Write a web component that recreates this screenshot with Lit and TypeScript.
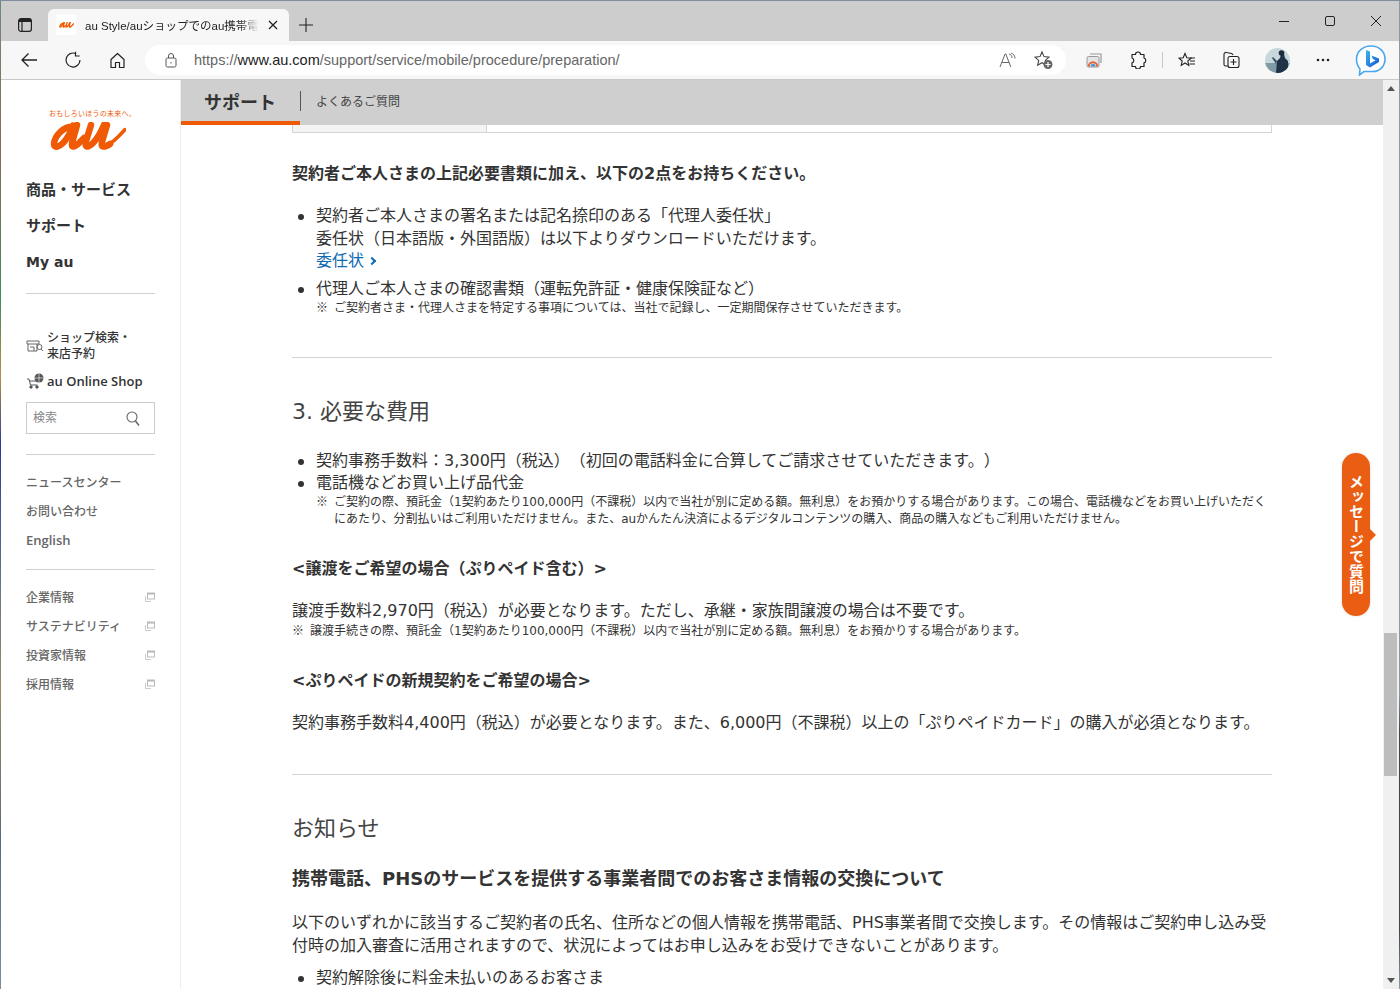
import { LitElement, html, css } from "lit";
import { customElement } from "lit/decorators.js";

const ext = html`<svg class="ext" width="10" height="10" viewBox="0 0 10 10"><path d="M0.5 4v5.5H6" fill="none" stroke="#ccc"/><rect x="2.5" y="1" width="7" height="6" fill="#fff" stroke="#bbb"/><rect x="2.5" y="1" width="7" height="1.6" fill="#bbb"/></svg>`;

@customElement("app-root")
export class AppRoot extends LitElement {
  static styles = css`
    :host { display: block; position: relative; width: 1400px; height: 989px; overflow: hidden; background: #fff; color: #333;
      font-family: "DejaVu Sans", "Noto Sans CJK JP", sans-serif; text-spacing-trim: space-all; }
    * { box-sizing: border-box; }
    svg { display: block; flex: none; }
    .tabs { height: 41px; background: #cdcdcd; border-top: 1px solid #7d8d9c; display: flex; align-items: flex-end; padding-left: 1px; }
    .tabicon { width: 47px; height: 32px; display: flex; align-items: center; justify-content: center; }
    .tab { width: 241px; height: 32px; background: #f7f7f7; border-radius: 6px 6px 0 0; display: flex; align-items: center; padding-left: 8px; font-size: 11.5px; color: #222; }
    .fav { width: 20px; height: 20px; background: #fff; display: flex; align-items: center; justify-content: center; margin-right: 9px; }
    .tabtitle { width: 174px; white-space: nowrap; overflow: hidden; font-family: "Liberation Sans", "Noto Sans CJK JP", sans-serif; -webkit-mask-image: linear-gradient(90deg, #000 88%, transparent); mask-image: linear-gradient(90deg, #000 88%, transparent); }
    .tabx { margin-left: 9px; }
    .newtab { width: 34px; height: 32px; display: flex; align-items: center; justify-content: center; }
    .winbtns { margin-left: auto; display: flex; align-self: stretch; align-items: center; gap: 30px; padding-right: 16px; }
    .toolbar { height: 39px; background: #f7f7f7; border-bottom: 1px solid #c9c9c9; display: flex; align-items: center; padding-left: 7px; position: relative; }
    .nav { width: 44px; display: flex; justify-content: center; }
    .addr { width: 921px; height: 30px; margin-left: 6px; background: #fff; border-radius: 15px; display: flex; align-items: center; padding-left: 20px; padding-right: 12px; font-family: "Liberation Sans", sans-serif; font-size: 14.5px; color: #666; }
    .addr b { font-weight: 400; color: #222; }
    .url { margin-left: 17px; flex: 1; }
    .addr-ico { display: flex; gap: 18px; align-items: center; }
    .tools { display: flex; align-items: center; margin-left: 8px; }
    .tool { width: 40px; display: flex; justify-content: center; }
    .tool.w48 { width: 48px; }
    .tool.w52 { width: 52px; }
    .tool.w56 { width: 56px; }
    .sep { width: 1px; height: 16px; background: #c8c8c8; }
    .main { display: flex; height: 909px; }
    .side { width: 181px; border-right: 1px solid #eee; flex: none; padding: 0 25px 0 26px; }
    .logo { display: flex; flex-direction: column; align-items: center; padding-top: 29px; height: 92px; padding-left: 4px; }
    .tag { font-size: 7px; line-height: 9px; color: #f05a05; white-space: nowrap; letter-spacing: 0.25px; font-family: "Noto Sans CJK JP", sans-serif; }
    .logo svg { margin-top: 4px; margin-right: 9px; }
    .gnav { display: block; font-weight: 700; font-size: 15px; line-height: 36px; color: #333; white-space: nowrap; }
    .gnav.latin { font-size: 14px; }
    .hr { height: 1px; background: #d0d0d0; }
    .hr.a { margin-top: 13px; }
    .hr.b { margin-top: 20px; }
    .hr.c { margin-top: 15px; }
    .spacer { height: 12px; }
    .shop { display: flex; align-items: center; gap: 3px; font-size: 12px; line-height: 16px; font-weight: 500; color: #333; font-family: "Noto Sans CJK JP", sans-serif; }
    .shop.s1 { margin-top: 35px; }
    .shop.s2 { margin-top: 12px; height: 16px; font-family: "Open Sans", sans-serif; font-weight: 600; font-size: 13px; }
    .search { height: 32px; border: 1px solid #ccc; margin-top: 13px; display: flex; align-items: center; justify-content: space-between; padding: 0 14px 0 6px; font-size: 12px; color: #888; font-family: "Noto Sans CJK JP", sans-serif; }
    .search span { margin-bottom: 3px; }
    .sub { display: flex; align-items: center; justify-content: space-between; height: 29px; font-size: 12px; color: #666; font-weight: 500; white-space: nowrap; font-family: "Open Sans", "Noto Sans CJK JP", sans-serif; }
    .sub.en { font-size: 13px; font-weight: 600; }
    .content { flex: 1; min-width: 0; }
    .hdr { height: 45px; background: #cfcfcf; display: flex; align-items: center; font-family: "Noto Sans CJK JP", sans-serif; }
    .hdr-title { width: 119px; height: 45px; border-bottom: 4px solid #f05a05; padding-left: 23px; font-size: 18px; font-weight: 700; line-height: 43px; color: #333; }
    .hdr-link { border-left: 1px solid #555; height: 20px; line-height: 20px; padding-left: 15px; font-size: 12px; color: #444; margin-top: -3px; }
    .art { padding: 0 111px; font-size: 16px; line-height: 22.5px; color: #333; }
    .tbl { height: 8px; border: 1px solid #d4d4d4; border-top: 0; display: flex; }
    .tbl i { display: block; width: 194px; background: #f4f4f4; border-right: 1px solid #d4d4d4; }
    p, h2, h3, ul { margin: 0; padding: 0; font-weight: 400; }
    h3 { font-weight: 700; font-size: 16px; line-height: 24px; }
    h3.big { font-size: 18px; }
    h2 { font-size: 22px; line-height: 32px; color: #444; }
    ul { list-style: none; }
    li { position: relative; padding-left: 24px; }
    li::before { content: ""; position: absolute; left: 6px; top: 9px; width: 6px; height: 6px; border-radius: 50%; background: #333; }
    .sm { font-size: 12px; line-height: 17.5px; display: flex; }
    .sm.tight { margin-top: -1px; }
    .sm.loose { margin-top: 1px; }
    .kome { flex: none; width: 18px; font-family: "Noto Sans CJK JP", sans-serif; margin-top: -2px; }
    a { color: #0f6cb2; }
    .ar { display: inline-block; width: 6px; height: 6px; border-top: 2px solid #0f6cb2; border-right: 2px solid #0f6cb2; transform: rotate(45deg); margin-left: 5px; vertical-align: 2px; }
    .div { height: 1px; background: #d4d4d4; margin-top: 39px; }
    .div.d2 { margin-top: 40px; }
    .mt5 { margin-top: 5px; }
    .mt10 { margin-top: 10px; }
    .mt19 { margin-top: 19px; }
    .mt21 { margin-top: 21px; }
    .mt22 { margin-top: 22px; }
    .mt28 { margin-top: 28px; }
    .mt29 { margin-top: 29px; }
    .mt38 { margin-top: 38px; }
    .sb { width: 17px; flex: none; background: #f0f0f0; position: relative; }
    .thumb { position: absolute; top: 553px; left: 1px; right: 3px; height: 143px; background: #bdbdbd; }
    .up, .dn { width: 0; height: 0; border-left: 4px solid transparent; border-right: 4px solid transparent; position: absolute; left: 4px; }
    .up { top: 6px; border-bottom: 5px solid #555; }
    .dn { bottom: 6px; border-top: 5px solid #555; }
    .msg { position: absolute; left: 1342px; top: 453px; width: 28px; height: 163px; background: #ea5e14; border-radius: 14px; color: #fff; font-weight: 700; font-size: 15px; writing-mode: vertical-rl; display: flex; align-items: center; justify-content: center; box-shadow: 0 0 3px rgba(0,0,0,.15); line-height: 28px; white-space: nowrap; padding-bottom: 2px; font-family: "Noto Sans CJK JP", sans-serif; }
    .msg::after { content: ""; position: absolute; left: 28px; top: 76px; border-left: 6px solid #ea5e14; border-top: 6px solid transparent; border-bottom: 6px solid transparent; }
    .strip { position: absolute; left: 0; top: 1px; bottom: 0; width: 1px; background: linear-gradient(180deg, #6f8a7a, #8a6a58 15%, #3f8a60 30%, #b59040 38%, #2a3a9a 45%, #6a7a86 60%, #9a8a60 70%, #5a6a7a 85%, #7d8d9c); }
    .rstrip { position: absolute; right: 0; top: 1px; bottom: 0; width: 1px; background: linear-gradient(180deg, #8c9aa6 70%, #444 74% 94%, #8c9aa6); }
  `;

  render() {
    return html`
      <div class="tabs">
        <div class="tabicon"><svg width="16" height="16" viewBox="0 0 16 16" fill="none" stroke="#222" stroke-width="1.2"><rect x="1.600" y="1.600" width="12.800" height="12.800" rx="2.400"/><path d="M2 2h12v3H2z" fill="#222" stroke="none"/><path d="M5 5v9"/></svg></div>
        <div class="tab">
          <span class="fav"><svg width="15" height="8" viewBox="0 0 76 28" fill="none" stroke="#f05a05" stroke-width="7" stroke-linecap="round"><path d="M24 5C14 4 5 14 4.500 22 4.500 26 9 25 13 21 17 17 20 12 22.500 3"/><path d="M27 2L22 19C20.500 26 24 26 29 21L34 16"/><path d="M41 2L36 19C34.500 26 38 26 43 21 48 16 51 10 54 2"/><path d="M57 2L52 18C50 26 54 26 60 22 66 18 70 13 75 8"/></svg></span>
          <span class="tabtitle">au Style/auショップでのau携帯電話</span>
          <svg class="tabx" width="10" height="10" viewBox="0 0 10 10" stroke="#222" stroke-width="1.300"><path d="M1 1l8 8M9 1l-8 8"/></svg>
        </div>
        <div class="newtab"><svg width="14" height="14" viewBox="0 0 14 14" stroke="#222" stroke-width="1.100"><path d="M7 0v14M0 7h14"/></svg></div>
        <div class="winbtns">
          <svg width="16" height="16" viewBox="0 0 16 16" stroke="#222" stroke-width="1"><path d="M3 8.500h10"/></svg>
          <svg width="16" height="16" viewBox="0 0 16 16" fill="none" stroke="#222" stroke-width="1"><rect x="3.500" y="3.500" width="9" height="9" rx="1.500"/></svg>
          <svg width="16" height="16" viewBox="0 0 16 16" stroke="#222" stroke-width="1"><path d="M3 3l10 10M13 3L3 13"/></svg>
        </div>
      </div>
      <div class="toolbar">
        <div class="nav"><svg width="18" height="16" viewBox="0 0 18 16" fill="none" stroke="#222" stroke-width="1.300"><path d="M17 8H2M8.500 1.500L2 8l6.500 6.500"/></svg></div>
        <div class="nav"><svg width="18" height="18" viewBox="0 0 18 18" fill="none" stroke="#222" stroke-width="1.200"><path d="M12 2.700A7 7 0 1 0 16 9"/><path d="M11.500 .8v4.200h4.200"/></svg></div>
        <div class="nav"><svg width="17" height="17" viewBox="0 0 17 17" fill="none" stroke="#222" stroke-width="1.200"><path d="M8.500 1.500L2 7.500v8h4.500v-5h4v5H15v-8z" stroke-linejoin="round"/></svg></div>
        <div class="addr">
          <svg width="12" height="15" viewBox="0 0 12 15" fill="none" stroke="#555"><rect x="1" y="5" width="10" height="9" rx="1.500"/><path d="M3.500 5V3a2.500 2.500 0 0 1 5 0v2"/><path d="M6 9v1.500"/></svg>
          <span class="url">https://<b>www.au.com</b>/support/service/mobile/procedure/preparation/</span>
          <span class="addr-ico">
            <svg width="17" height="16" viewBox="0 0 17 16" fill="none" stroke="#666" stroke-width="1"><path d="M1 15L6 2h.8l5 13M3 10.500h7"/><path d="M10 2c2 .5 3 2 3 4M12 1c2.500.8 4 3 4 5.500"/></svg>
            <svg width="20" height="20" viewBox="0 0 20 20" fill="none" stroke="#444" stroke-width="1.100"><path d="M8 2l2 4.600 5 .5-3.700 3.300 1 4.800L8 12.700l-4.300 2.500 1-4.800L1 7.100l5-.5z"/><circle cx="14" cy="14.500" r="4.500" fill="#666" stroke="none"/><path d="M14 12v5M11.500 14.500h5" stroke="#fff" stroke-width="1.200"/></svg>
          </span>
        </div>
        <div class="tools">
          <div class="tool"><svg width="16" height="15" viewBox="0 0 16 15" fill="none"><path d="M4 1h11v9" stroke="#999" stroke-width="1.200"/><rect x="1" y="3.500" width="12" height="10.500" rx="1.500" fill="#e4e4e4" stroke="#999"/><path d="M2.800 13.500a4.200 4.200 0 0 1 8.400 0" stroke="#e2603a" stroke-width="2"/><path d="M5.600 13.500a1.500 1.500 0 0 1 3 0" stroke="#3a8fd0" stroke-width="1.800"/></svg></div>
          <div class="tool w48"><svg width="18" height="18" viewBox="0 0 18 18" fill="none" stroke="#222" stroke-width="1.200"><path d="M6.500 3.500a2.500 2.500 0 0 1 5 0H15v3.500a2.500 2.500 0 0 1 0 4.800V15.500h-3.500a2.500 2.500 0 0 1-5 0H3v-3.700a2.500 2.500 0 0 0 0-4.800V3.500z" stroke-linejoin="round"/></svg></div>
          <div class="sep"></div>
          <div class="tool w48"><svg width="18" height="17" viewBox="0 0 18 17" fill="none" stroke="#222" stroke-width="1.100"><path d="M7 1.500l1.800 4.200 4.200.4-3.200 2.900 1 4.400L7 11l-3.800 2.400 1-4.400L1 6.100l4.200-.4z"/><path d="M12 6h5M12 9h5M11.500 12h5.500"/></svg></div>
          <div class="tool"><svg width="18" height="18" viewBox="0 0 18 18" fill="none" stroke="#222" stroke-width="1.100"><path d="M6 15H3.500A1.500 1.500 0 0 1 2 13.500V3a2 2 0 0 1 2.500-1.500l5 1c.8.200 1.300.8 1.500 1.500"/><rect x="6" y="5.500" width="11" height="11" rx="2" fill="#f7f7f7"/><path d="M11.500 8v6M8.500 11h6"/></svg></div>
          <div class="tool w52"><svg width="25" height="25" viewBox="0 0 25 25"><defs><clipPath id="av"><circle cx="12.500" cy="12.500" r="12.500"/></clipPath></defs><g clip-path="url(#av)"><rect width="25" height="25" fill="#c6d8dc"/><rect y="15" width="25" height="10" fill="#7f9ba5"/><path d="M11 25l1-12 3-3 1-4h3l1 4 3 3v12z" fill="#1f3247"/><circle cx="16.500" cy="5" r="2.800" fill="#1f2a38"/><path d="M12 13L8 9l-1 1 4 6z" fill="#3c5060"/></g></svg></div>
          <div class="tool"><svg width="14" height="4" viewBox="0 0 14 4" fill="#222"><circle cx="2" cy="2" r="1.300"/><circle cx="7" cy="2" r="1.300"/><circle cx="12" cy="2" r="1.300"/></svg></div>
          <div class="tool w56"><svg width="32" height="32" viewBox="0 0 32 32"><defs><linearGradient id="bg" x1="0" y1="0" x2="1" y2="1"><stop offset="0" stop-color="#38b6f0"/><stop offset="1" stop-color="#1558d6"/></linearGradient></defs><path d="M16 2c8 0 14 5.500 14 13s-5.500 12.500-12.500 12.500H9L4.500 31l.5-6C2.500 22 1.500 18.500 1.500 15 1.500 7.500 8 2 16 2z" fill="#fff" stroke="#4aa8ee" stroke-width="1.600"/><path d="M11 6l4 1.500v12l5.500-3.200-2.700-1.300-1.300-3.500 7.500 3v3.500l-9 5.500-4-2.500z" fill="url(#bg)"/></svg></div>
        </div>
      </div>
      <div class="main">
        <div class="side">
          <div class="logo">
            <div class="tag">おもしろいほうの未来へ。</div>
            <svg width="76" height="28" viewBox="0 0 76 28" fill="none" stroke="#f05a05" stroke-width="6.500" stroke-linecap="round" stroke-linejoin="round"><path d="M24 5C14 3.500 4.500 14 4 22 4 26.500 9 25 13 21 17 17 20 12 23 3.500"/><path d="M27 3L22.500 19C20.500 26 24 26 29 21L34 16"/><path d="M41 3L36 19C34.500 26 38 26 43 21 48 16 51 10 54 3"/><path d="M57 3L52.500 18C50 26 54 26 60 22"/><path d="M58 23C65 19 70 13 75 7.500" stroke-width="3.500"/></svg>
          </div>
          <a class="gnav">商品・サービス</a>
          <a class="gnav">サポート</a>
          <a class="gnav latin">My au</a>
          <div class="hr a"></div>
          <div class="shop s1"><svg width="18" height="14" viewBox="0 0 18 14" fill="none" stroke="#666"><path d="M1 3h12v3H1zM2 6v7h9V6M4 9h4v4"/><circle cx="13.500" cy="9" r="2.500"/><path d="M15 11l2 2"/></svg><span>ショップ検索・<br>来店予約</span></div>
          <div class="shop s2"><svg width="18" height="16" viewBox="0 0 18 16" fill="none" stroke="#555"><path d="M1 6h2l1.500 6h7M4 8h7"/><circle cx="5" cy="14" r="1.200" fill="#555"/><circle cx="11" cy="14" r="1.200" fill="#555"/><circle cx="13" cy="5" r="4.500" fill="#555" stroke="none"/><path d="M13 .5v9M8.500 5h9" stroke="#fff" stroke-width=".6"/></svg><span>au Online Shop</span></div>
          <div class="search"><span>検索</span><svg width="14" height="15" viewBox="0 0 14 15" fill="none" stroke="#666" stroke-width="1.100"><circle cx="6" cy="6" r="5"/><path d="M9.500 10l3.500 4.500" stroke-width="1.500"/></svg></div>
          <div class="hr b"></div>
          <div class="spacer"></div>
          <div class="sub">ニュースセンター</div>
          <div class="sub">お問い合わせ</div>
          <div class="sub en">English</div>
          <div class="hr c"></div>
          <div class="spacer"></div>
          <div class="sub">企業情報${ext}</div>
          <div class="sub">サステナビリティ${ext}</div>
          <div class="sub">投資家情報${ext}</div>
          <div class="sub">採用情報${ext}</div>
        </div>
        <div class="content">
          <div class="hdr"><div class="hdr-title">サポート</div><div class="hdr-link">よくあるご質問</div></div>
          <div class="art">
            <div class="tbl"><i></i></div>
            <h3 class="mt29">契約者ご本人さまの上記必要書類に加え、以下の2点をお持ちください。</h3>
            <ul class="mt19">
              <li>契約者ご本人さまの署名または記名捺印のある「代理人委任状」<br>委任状（日本語版・外国語版）は以下よりダウンロードいただけます。<br><a>委任状<i class="ar"></i></a></li>
              <li class="mt5">代理人ご本人さまの確認書類（運転免許証・健康保険証など）
                <div class="sm"><span class="kome">※</span><span>ご契約者さま・代理人さまを特定する事項については、当社で記録し、一定期間保存させていただきます。</span></div></li>
            </ul>
            <div class="div"></div>
            <h2 class="mt38">3. 必要な費用</h2>
            <ul class="mt22">
              <li>契約事務手数料：3,300円（税込）（初回の電話料金に合算してご請求させていただきます。）</li>
              <li>電話機などお買い上げ品代金
                <div class="sm tight"><span class="kome">※</span><span>ご契約の際、預託金（1契約あたり100,000円（不課税）以内で当社が別に定める額。無利息）をお預かりする場合があります。この場合、電話機などをお買い上げいただくにあたり、分割払いはご利用いただけません。また、auかんたん決済によるデジタルコンテンツの購入、商品の購入などもご利用いただけません。</span></div></li>
            </ul>
            <h3 class="mt28">&lt;譲渡をご希望の場合（ぷりペイド含む）&gt;</h3>
            <p class="mt19">譲渡手数料2,970円（税込）が必要となります。ただし、承継・家族間譲渡の場合は不要です。</p>
            <div class="sm loose"><span class="kome">※</span><span>譲渡手続きの際、預託金（1契約あたり100,000円（不課税）以内で当社が別に定める額。無利息）をお預かりする場合があります。</span></div>
            <h3 class="mt28">&lt;ぷりペイドの新規契約をご希望の場合&gt;</h3>
            <p class="mt19">契約事務手数料4,400円（税込）が必要となります。また、6,000円（不課税）以上の「ぷりペイドカード」の購入が必須となります。</p>
            <div class="div d2"></div>
            <h2 class="mt38">お知らせ</h2>
            <h3 class="big mt22">携帯電話、PHSのサービスを提供する事業者間でのお客さま情報の交換について</h3>
            <p class="mt21">以下のいずれかに該当するご契約者の氏名、住所などの個人情報を携帯電話、PHS事業者間で交換します。その情報はご契約申し込み受付時の加入審査に活用されますので、状況によってはお申し込みをお受けできないことがあります。</p>
            <ul class="mt10"><li>契約解除後に料金未払いのあるお客さま</li></ul>
          </div>
        </div>
        <div class="sb"><div class="up"></div><div class="thumb"></div><div class="dn"></div></div>
      </div>
      <div class="strip"></div>
      <div class="rstrip"></div>
      <div class="msg">メッセージで質問</div>
    `;
  }
}
